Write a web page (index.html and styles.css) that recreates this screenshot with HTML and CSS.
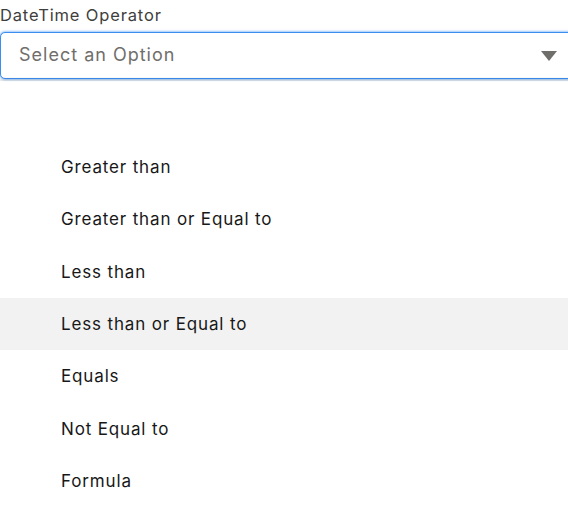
FILE: index.html
```html
<!DOCTYPE html>
<html lang="en">
<head>
<meta charset="utf-8">
<title>DateTime Operator</title>
<link rel="stylesheet" href="styles.css">
</head>
<body>
<div class="field">
  <label class="field-label">DateTime Operator</label>
  <div class="combobox">
    <span class="placeholder">Select an Option</span>
    <svg class="caret" width="16" height="10" viewBox="0 0 16 10" aria-hidden="true"><path d="M0 0H16L8 10Z" fill="#706e6b"/></svg>
  </div>
  <ul class="listbox">
    <li class="option">Greater than</li>
    <li class="option">Greater than or Equal to</li>
    <li class="option">Less than</li>
    <li class="option is-hover">Less than or Equal to</li>
    <li class="option">Equals</li>
    <li class="option">Not Equal to</li>
    <li class="option">Formula</li>
  </ul>
</div>
</body>
</html>
```
FILE: styles.css
```css
html, body {
  margin: 0;
  padding: 0;
  background: #ffffff;
  overflow: hidden;
}
body {
  font-family: Inter, "Noto Sans", "Liberation Sans", sans-serif;
  color: #181818;
}
.field {
  width: 580px;
}
.field-label {
  display: block;
  font-size: 16.5px;
  letter-spacing: 0.85px;
  line-height: 20px;
  color: #3e3e3c;
  padding-top: 5px;
  height: 25px;
  box-sizing: border-box;
  margin-bottom: 7px;
}
.combobox {
  display: flex;
  align-items: center;
  justify-content: space-between;
  height: 47px;
  box-sizing: border-box;
  border: 1px solid #3b8df0;
  border-radius: 5px;
  box-shadow: 0 0 3px #3b8df0;
  padding: 0 22px 3px 18px;
  background: #fff;
}
.placeholder {
  font-size: 18px;
  letter-spacing: 1px;
  color: #706e6b;
}
.caret {
  display: block;
  margin-top: 4px;
}
.listbox {
  list-style: none;
  margin: 2px 0 0;
  padding: 60px 0 0;
  box-shadow: 0 -2px 3px rgba(0,0,0,0.12);
}
.option {
  height: 52.34px;
  display: flex;
  align-items: center;
  padding-left: 61px;
  font-size: 17px;
  letter-spacing: 0.85px;
  color: #181818;
}
.option.is-hover {
  background: #f2f2f2;
}
```
